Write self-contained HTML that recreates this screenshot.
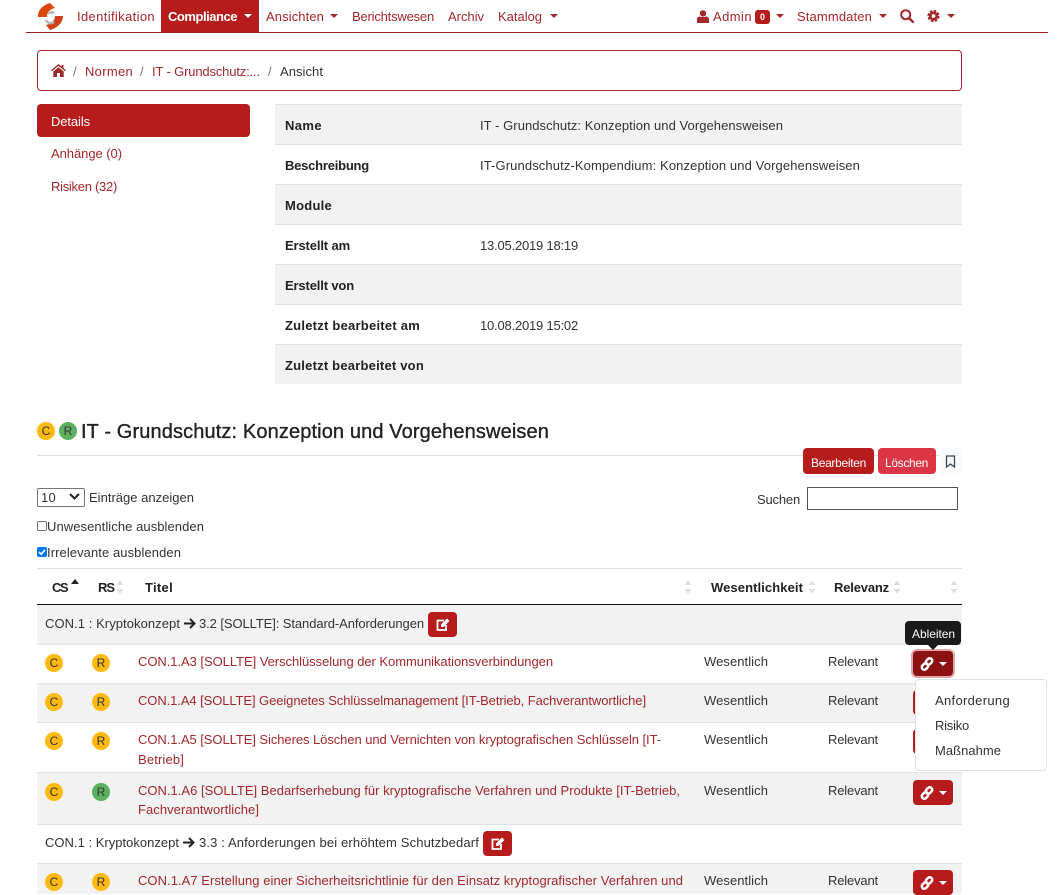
<!DOCTYPE html>
<html lang="de">
<head>
<meta charset="utf-8">
<title>IT - Grundschutz</title>
<style>
html,body{margin:0;padding:0;background:#fff}
body{width:1060px;height:894px;overflow:hidden;position:relative;font-family:"Liberation Sans",Arial,sans-serif;font-size:13px;color:#333}
.t{position:absolute;white-space:nowrap;line-height:16px;height:16px;margin-top:1px}
.b{position:absolute}
.l{color:#a3282c}
.w{font-weight:bold;color:#222}
.g{background:#f2f2f2}
.hl{position:absolute;height:1px;background:#e2e2e2}
.btn{position:absolute;background:#b71c1c;border-radius:4px}
.c{position:absolute;width:18px;height:18px;border-radius:50%;background:#ffb90f;text-align:center;font-size:12px;line-height:18px;color:#333}
.c.gr{background:#5cb05f}
svg{position:absolute;display:block}
.car{position:absolute;width:0;height:0;border-left:4px solid transparent;border-right:4px solid transparent;border-top:4px solid #a3282c}
</style>
</head>
<body>
<!-- navbar -->
<div class="b" style="left:26px;top:32px;width:1022px;height:1px;background:#9c2020"></div>
<svg style="left:36px;top:2px" width="29" height="29" viewBox="0 0 29 29">
<path d="M2 14C2 8 7 3 14 1l5 5c-5 1-8 4-8 9H2z" fill="#d9480f"/>
<path d="M27 14c0 7-6 12-13 14l-4-5c5-1 9-4 9-9z" fill="#d2401a"/>
<path d="M10 18c1 3 5 4 8 2M18 11c-2-1-4-1-5 1" fill="none" stroke="#b5b5b5" stroke-width="2.500"/>
</svg>
<div class="t l" style="left:77px;top:8px;width:78px">Identifikation</div>
<div class="b" style="left:161px;top:0;width:98px;height:32px;background:#b71c1c"></div>
<div class="t" style="left:168px;top:8px;width:69px;color:#fff;font-weight:bold">Compliance</div>
<div class="car" style="left:244px;top:14px;border-top-color:#fff"></div>
<div class="t l" style="left:266px;top:8px;width:58px">Ansichten</div>
<div class="car" style="left:330px;top:14px"></div>
<div class="t l" style="left:352px;top:8px;width:82px">Berichtswesen</div>
<div class="t l" style="left:448px;top:8px;width:36px">Archiv</div>
<div class="t l" style="left:498px;top:8px;width:44px">Katalog</div>
<div class="car" style="left:550px;top:14px"></div>
<svg style="left:697px;top:10px" width="12" height="13" viewBox="0 0 12 13"><circle cx="6" cy="3.400" r="3.200" fill="#a3282c"/><path d="M0 13V9.500C0 7.500 1.500 6.500 3 6.500c1 .8 5 .8 6 0 1.500 0 3 1 3 3V13z" fill="#a3282c"/></svg>
<div class="t l" style="left:713px;top:8px;width:39px">Admin</div>
<div class="b" style="left:755px;top:10px;width:15px;height:14px;background:#b71c1c;border-radius:3px;color:#fff;font-size:9px;font-weight:bold;text-align:center;line-height:14px">0</div>
<div class="car" style="left:776px;top:14px"></div>
<div class="t l" style="left:797px;top:8px;width:75px">Stammdaten</div>
<div class="car" style="left:879px;top:14px"></div>
<svg style="left:900px;top:9px" width="14" height="14" viewBox="0 0 14 14"><circle cx="5.700" cy="5.700" r="4.500" fill="none" stroke="#a3282c" stroke-width="2"/><path d="M9 9l4 4" stroke="#a3282c" stroke-width="2.400" stroke-linecap="round"/></svg>
<svg style="left:927px;top:9px" width="13" height="14" viewBox="0 0 13 14"><circle cx="6.500" cy="7" r="3.200" fill="none" stroke="#a3282c" stroke-width="2.600"/><circle cx="6.500" cy="7" r="5" fill="none" stroke="#a3282c" stroke-width="2.200" stroke-dasharray="2.600 1.330"/></svg>
<div class="car" style="left:947px;top:14px"></div>

<!-- breadcrumb -->
<div class="b" style="left:37px;top:50px;width:923px;height:39px;border:1px solid #a3282c;border-radius:4px"></div>
<svg style="left:51px;top:64px" width="15" height="13" viewBox="0 0 15 13"><path d="M7.500 0L0 6.300l.8 1L7.500 1.900l6.700 5.400.8-1L12.500 4.200V1h-2v1.500z" fill="#a3282c"/><path d="M2.300 7.500L7.500 3.300l5.200 4.200V13H9V9H6v4H2.300z" fill="#a3282c"/></svg>
<div class="t" style="left:73px;top:63px;color:#777">/</div>
<div class="t l" style="left:85px;top:63px;width:48px">Normen</div>
<div class="t" style="left:140px;top:63px;color:#777">/</div>
<div class="t l" style="left:152px;top:63px;width:108px">IT - Grundschutz:...</div>
<div class="t" style="left:268px;top:63px;color:#777">/</div>
<div class="t" style="left:280px;top:63px;width:43px">Ansicht</div>

<!-- side nav -->
<div class="b" style="left:37px;top:104px;width:213px;height:33px;background:#b71c1c;border-radius:4px"></div>
<div class="t" style="left:51px;top:113px;width:39px;color:#fff">Details</div>
<div class="t l" style="left:51px;top:145px;width:71px">Anhänge (0)</div>
<div class="t l" style="left:51px;top:178px;width:66px">Risiken (32)</div>

<!-- details table -->
<div class="b g" style="left:275px;top:105px;width:687px;height:39px"></div>
<div class="b g" style="left:275px;top:185px;width:687px;height:39px"></div>
<div class="b g" style="left:275px;top:265px;width:687px;height:39px"></div>
<div class="b g" style="left:275px;top:345px;width:687px;height:39px"></div>
<div class="hl" style="left:275px;top:104px;width:687px"></div>
<div class="hl" style="left:275px;top:144px;width:687px"></div>
<div class="hl" style="left:275px;top:184px;width:687px"></div>
<div class="hl" style="left:275px;top:224px;width:687px"></div>
<div class="hl" style="left:275px;top:264px;width:687px"></div>
<div class="hl" style="left:275px;top:304px;width:687px"></div>
<div class="hl" style="left:275px;top:344px;width:687px"></div>
<div class="t w" style="left:285px;top:117px;width:37px">Name</div>
<div class="t" style="left:480px;top:117px;width:303px">IT - Grundschutz: Konzeption und Vorgehensweisen</div>
<div class="t w" style="left:285px;top:157px;width:84px">Beschreibung</div>
<div class="t" style="left:480px;top:157px;width:380px">IT-Grundschutz-Kompendium: Konzeption und Vorgehensweisen</div>
<div class="t w" style="left:285px;top:197px;width:47px">Module</div>
<div class="t w" style="left:285px;top:237px;width:65px">Erstellt am</div>
<div class="t" style="left:480px;top:237px;width:98px">13.05.2019 18:19</div>
<div class="t w" style="left:285px;top:277px;width:69px">Erstellt von</div>
<div class="t w" style="left:285px;top:317px;width:135px">Zuletzt bearbeitet am</div>
<div class="t" style="left:480px;top:317px;width:98px">10.08.2019 15:02</div>
<div class="t w" style="left:285px;top:357px;width:139px">Zuletzt bearbeitet von</div>

<!-- heading -->
<div class="c" style="left:37px;top:422px">C</div>
<div class="c gr" style="left:59px;top:422px">R</div>
<div class="t" style="left:81px;top:419px;width:468px;height:24px;line-height:24px;font-size:20px;color:#222;-webkit-text-stroke:.35px #222">IT - Grundschutz: Konzeption und Vorgehensweisen</div>
<div class="hl" style="left:37px;top:455px;width:925px;background:#ddd"></div>
<div class="btn" style="left:803px;top:448px;width:71px;height:26px"></div>
<div class="t" style="left:811px;top:454px;width:55px;font-size:12px;color:#fff">Bearbeiten</div>
<div class="btn" style="left:878px;top:448px;width:58px;height:26px;background:#dc3545"></div>
<div class="t" style="left:885px;top:454px;width:43px;font-size:12px;color:#fff">Löschen</div>
<div class="b" style="left:939px;top:448px;width:23px;height:26px;background:#f8f9fa;border-radius:4px"></div>
<svg style="left:945px;top:455px" width="11" height="13" viewBox="0 0 11 13"><path d="M1.500 1h8v11l-4-3-4 3z" fill="none" stroke="#3a4750" stroke-width="1.300"/></svg>

<!-- controls -->
<div class="b" style="left:37px;top:488px;width:46px;height:17px;border:1px solid #767676;border-radius:2px"></div>
<div class="t" style="left:41px;top:489px;width:15px">10</div>
<svg style="left:69px;top:493px" width="11" height="7" viewBox="0 0 11 7"><path d="M1 1l4.500 4.500L10 1" fill="none" stroke="#222" stroke-width="2"/></svg>
<div class="t" style="left:89px;top:489px;width:105px">Einträge anzeigen</div>
<div class="t" style="left:757px;top:491px;width:43px">Suchen</div>
<div class="b" style="left:807px;top:487px;width:149px;height:21px;border:1px solid #555"></div>
<div class="b" style="left:37px;top:521px;width:8px;height:8px;border:1px solid #767676;border-radius:2px"></div>
<div class="t" style="left:47px;top:518px;width:157px">Unwesentliche ausblenden</div>
<div class="b" style="left:37px;top:547px;width:10px;height:10px;background:#0075ff;border-radius:2px"></div>
<svg style="left:37px;top:547px" width="10" height="10" viewBox="0 0 10 10"><path d="M2 5l2.200 2.200L8 2.800" fill="none" stroke="#fff" stroke-width="1.600"/></svg>
<div class="t" style="left:47px;top:544px;width:134px">Irrelevante ausblenden</div>

<!-- table head -->
<div class="hl" style="left:37px;top:568px;width:925px;background:#ddd"></div>
<div class="b" style="left:37px;top:604px;width:925px;height:1px;background:#111"></div>
<div class="t w" style="left:52px;top:579px;width:15px">CS</div>
<svg style="left:71px;top:579px" width="8" height="5" viewBox="0 0 8 5"><path d="M4 0l4 5H0z" fill="#222"/></svg>
<div class="t w" style="left:98px;top:579px;width:16px">RS</div>
<div class="t w" style="left:145px;top:579px;width:28px">Titel</div>
<div class="t w" style="left:711px;top:579px;width:92px">Wesentlichkeit</div>
<div class="t w" style="left:834px;top:579px;width:55px">Relevanz</div>
<svg style="left:0;top:0" width="1060" height="600" viewBox="0 0 1060 600">
<g fill="#ddd">
<path d="M120 580.500l3.500 4.500h-7zM120 593.500l3.500-4.500h-7z"/>
<path d="M688 580.500l3.500 4.500h-7zM688 593.500l3.500-4.500h-7z"/>
<path d="M812 580.500l3.500 4.500h-7zM812 593.500l3.500-4.500h-7z"/>
<path d="M897 580.500l3.500 4.500h-7zM897 593.500l3.500-4.500h-7z"/>
<path d="M954 580.500l3.500 4.500h-7zM954 593.500l3.500-4.500h-7z"/>
</g>
</svg>

<!-- rows -->
<div class="b g" style="left:37px;top:605px;width:925px;height:39px"></div>
<div class="b g" style="left:37px;top:684px;width:925px;height:38px"></div>
<div class="b g" style="left:37px;top:773px;width:925px;height:51px"></div>
<div class="b g" style="left:37px;top:864px;width:925px;height:30px"></div>
<div class="hl" style="left:37px;top:644px;width:925px"></div>
<div class="hl" style="left:37px;top:683px;width:925px"></div>
<div class="hl" style="left:37px;top:722px;width:925px"></div>
<div class="hl" style="left:37px;top:772px;width:925px"></div>
<div class="hl" style="left:37px;top:824px;width:925px"></div>
<div class="hl" style="left:37px;top:863px;width:925px"></div>

<!-- group 1 -->
<div class="t" style="left:45px;top:615px;width:135px">CON.1 : Kryptokonzept</div>
<svg style="left:184px;top:618px" width="12" height="11" viewBox="0 0 12 11"><path d="M0 5.500h10M6 1l4.500 4.500L6 10" fill="none" stroke="#222" stroke-width="2"/></svg>
<div class="t" style="left:199px;top:615px;width:225px">3.2 [SOLLTE]: Standard-Anforderungen</div>
<div class="btn" style="left:428px;top:612px;width:29px;height:25px"></div>
<svg style="left:435px;top:617px" width="16" height="15" viewBox="0 0 16 15"><path d="M9 3.500H2.500v9.500H11V8" fill="none" stroke="#fff" stroke-width="1.800"/><path d="M6 7.500L12 1.500l2.500 2.500-6 6H6z" fill="#fff"/></svg>

<!-- A3 -->
<div class="c" style="left:45px;top:654px">C</div>
<div class="c" style="left:92px;top:654px">R</div>
<div class="t l" style="left:138px;top:653px;width:415px">CON.1.A3 [SOLLTE] Verschlüsselung der Kommunikationsverbindungen</div>
<div class="t" style="left:704px;top:653px;width:64px">Wesentlich</div>
<div class="t" style="left:828px;top:653px;width:50px">Relevant</div>
<!-- A4 -->
<div class="c" style="left:45px;top:693px">C</div>
<div class="c" style="left:92px;top:693px">R</div>
<div class="t l" style="left:138px;top:692px;width:508px">CON.1.A4 [SOLLTE] Geeignetes Schlüsselmanagement [IT-Betrieb, Fachverantwortliche]</div>
<div class="t" style="left:704px;top:692px;width:64px">Wesentlich</div>
<div class="t" style="left:828px;top:692px;width:50px">Relevant</div>
<div class="btn" style="left:913px;top:690px;width:40px;height:25px"></div>
<!-- A5 -->
<div class="c" style="left:45px;top:732px">C</div>
<div class="c" style="left:92px;top:732px">R</div>
<div class="t l" style="left:138px;top:731px;width:523px">CON.1.A5 [SOLLTE] Sicheres Löschen und Vernichten von kryptografischen Schlüsseln [IT-</div>
<div class="t l" style="left:138px;top:751px;width:46px">Betrieb]</div>
<div class="t" style="left:704px;top:731px;width:64px">Wesentlich</div>
<div class="t" style="left:828px;top:731px;width:50px">Relevant</div>
<div class="btn" style="left:913px;top:729px;width:40px;height:25px"></div>
<!-- A6 -->
<div class="c" style="left:45px;top:783px">C</div>
<div class="c gr" style="left:92px;top:783px">R</div>
<div class="t l" style="left:138px;top:782px;width:542px">CON.1.A6 [SOLLTE] Bedarfserhebung für kryptografische Verfahren und Produkte [IT-Betrieb,</div>
<div class="t l" style="left:138px;top:801px;width:121px">Fachverantwortliche]</div>
<div class="t" style="left:704px;top:782px;width:64px">Wesentlich</div>
<div class="t" style="left:828px;top:782px;width:50px">Relevant</div>
<div class="btn" style="left:913px;top:780px;width:40px;height:25px"></div>
<svg style="left:920px;top:786px" width="14" height="14" viewBox="0 0 14 14"><g fill="none" stroke="#fff" stroke-width="2.500"><rect x="6.500" y="1" width="5" height="7" rx="2.500" transform="rotate(45 9 4.500)"/><rect x="2.500" y="6" width="5" height="7" rx="2.500" transform="rotate(45 5 9.500)"/></g></svg>
<div class="car" style="left:939px;top:791px;border-top-color:#fff"></div>
<!-- group 2 -->
<div class="t" style="left:45px;top:834px;width:134px">CON.1 : Kryptokonzept</div>
<svg style="left:183px;top:837px" width="12" height="11" viewBox="0 0 12 11"><path d="M0 5.500h10M6 1l4.500 4.500L6 10" fill="none" stroke="#222" stroke-width="2"/></svg>
<div class="t" style="left:199px;top:834px;width:280px">3.3 : Anforderungen bei erhöhtem Schutzbedarf</div>
<div class="btn" style="left:483px;top:831px;width:29px;height:25px"></div>
<svg style="left:490px;top:836px" width="16" height="15" viewBox="0 0 16 15"><path d="M9 3.500H2.500v9.500H11V8" fill="none" stroke="#fff" stroke-width="1.800"/><path d="M6 7.500L12 1.500l2.500 2.500-6 6H6z" fill="#fff"/></svg>
<!-- A7 -->
<div class="c" style="left:45px;top:873px">C</div>
<div class="c" style="left:92px;top:873px">R</div>
<div class="t l" style="left:138px;top:872px;width:545px">CON.1.A7 Erstellung einer Sicherheitsrichtlinie für den Einsatz kryptografischer Verfahren und</div>
<div class="t" style="left:704px;top:872px;width:64px">Wesentlich</div>
<div class="t" style="left:828px;top:872px;width:50px">Relevant</div>
<div class="btn" style="left:913px;top:870px;width:40px;height:25px"></div>
<svg style="left:920px;top:876px" width="14" height="14" viewBox="0 0 14 14"><g fill="none" stroke="#fff" stroke-width="2.500"><rect x="6.500" y="1" width="5" height="7" rx="2.500" transform="rotate(45 9 4.500)"/><rect x="2.500" y="6" width="5" height="7" rx="2.500" transform="rotate(45 5 9.500)"/></g></svg>
<div class="car" style="left:939px;top:881px;border-top-color:#fff"></div>

<!-- focused button, tooltip, dropdown -->
<div class="btn" style="left:913px;top:651px;width:40px;height:25px;background:#8a1212;box-shadow:0 0 0 2px #e3a5a8"></div>
<svg style="left:920px;top:657px" width="14" height="14" viewBox="0 0 14 14"><g fill="none" stroke="#fff" stroke-width="2.500"><rect x="6.500" y="1" width="5" height="7" rx="2.500" transform="rotate(45 9 4.500)"/><rect x="2.500" y="6" width="5" height="7" rx="2.500" transform="rotate(45 5 9.500)"/></g></svg>
<div class="car" style="left:939px;top:662px;border-top-color:#fff"></div>
<div class="b" style="left:905px;top:621px;width:56px;height:24px;background:#1a1a1a;border-radius:4px"></div>
<div class="b" style="left:928px;top:645px;width:0;height:0;border-left:5px solid transparent;border-right:5px solid transparent;border-top:5px solid #1a1a1a"></div>
<div class="t" style="left:912px;top:625px;width:43px;font-size:12px;color:#fff">Ableiten</div>
<div class="b" style="left:915px;top:679px;width:130px;height:90px;background:#fff;border:1px solid #e2e2e2;border-radius:4px"></div>
<div class="t" style="left:935px;top:692px;width:75px">Anforderung</div>
<div class="t" style="left:935px;top:717px;width:34px">Risiko</div>
<div class="t" style="left:935px;top:742px;width:66px">Maßnahme</div>

<script>
document.querySelectorAll('.t').forEach(function(e){
  var w=parseFloat(e.style.width);
  if(!w)return;
  e.style.width='auto';
  var n=e.getBoundingClientRect().width,c=e.textContent.length;
  if(c>1)e.style.letterSpacing=((w-n)/c).toFixed(3)+'px';
});
</script>
</body>
</html>
